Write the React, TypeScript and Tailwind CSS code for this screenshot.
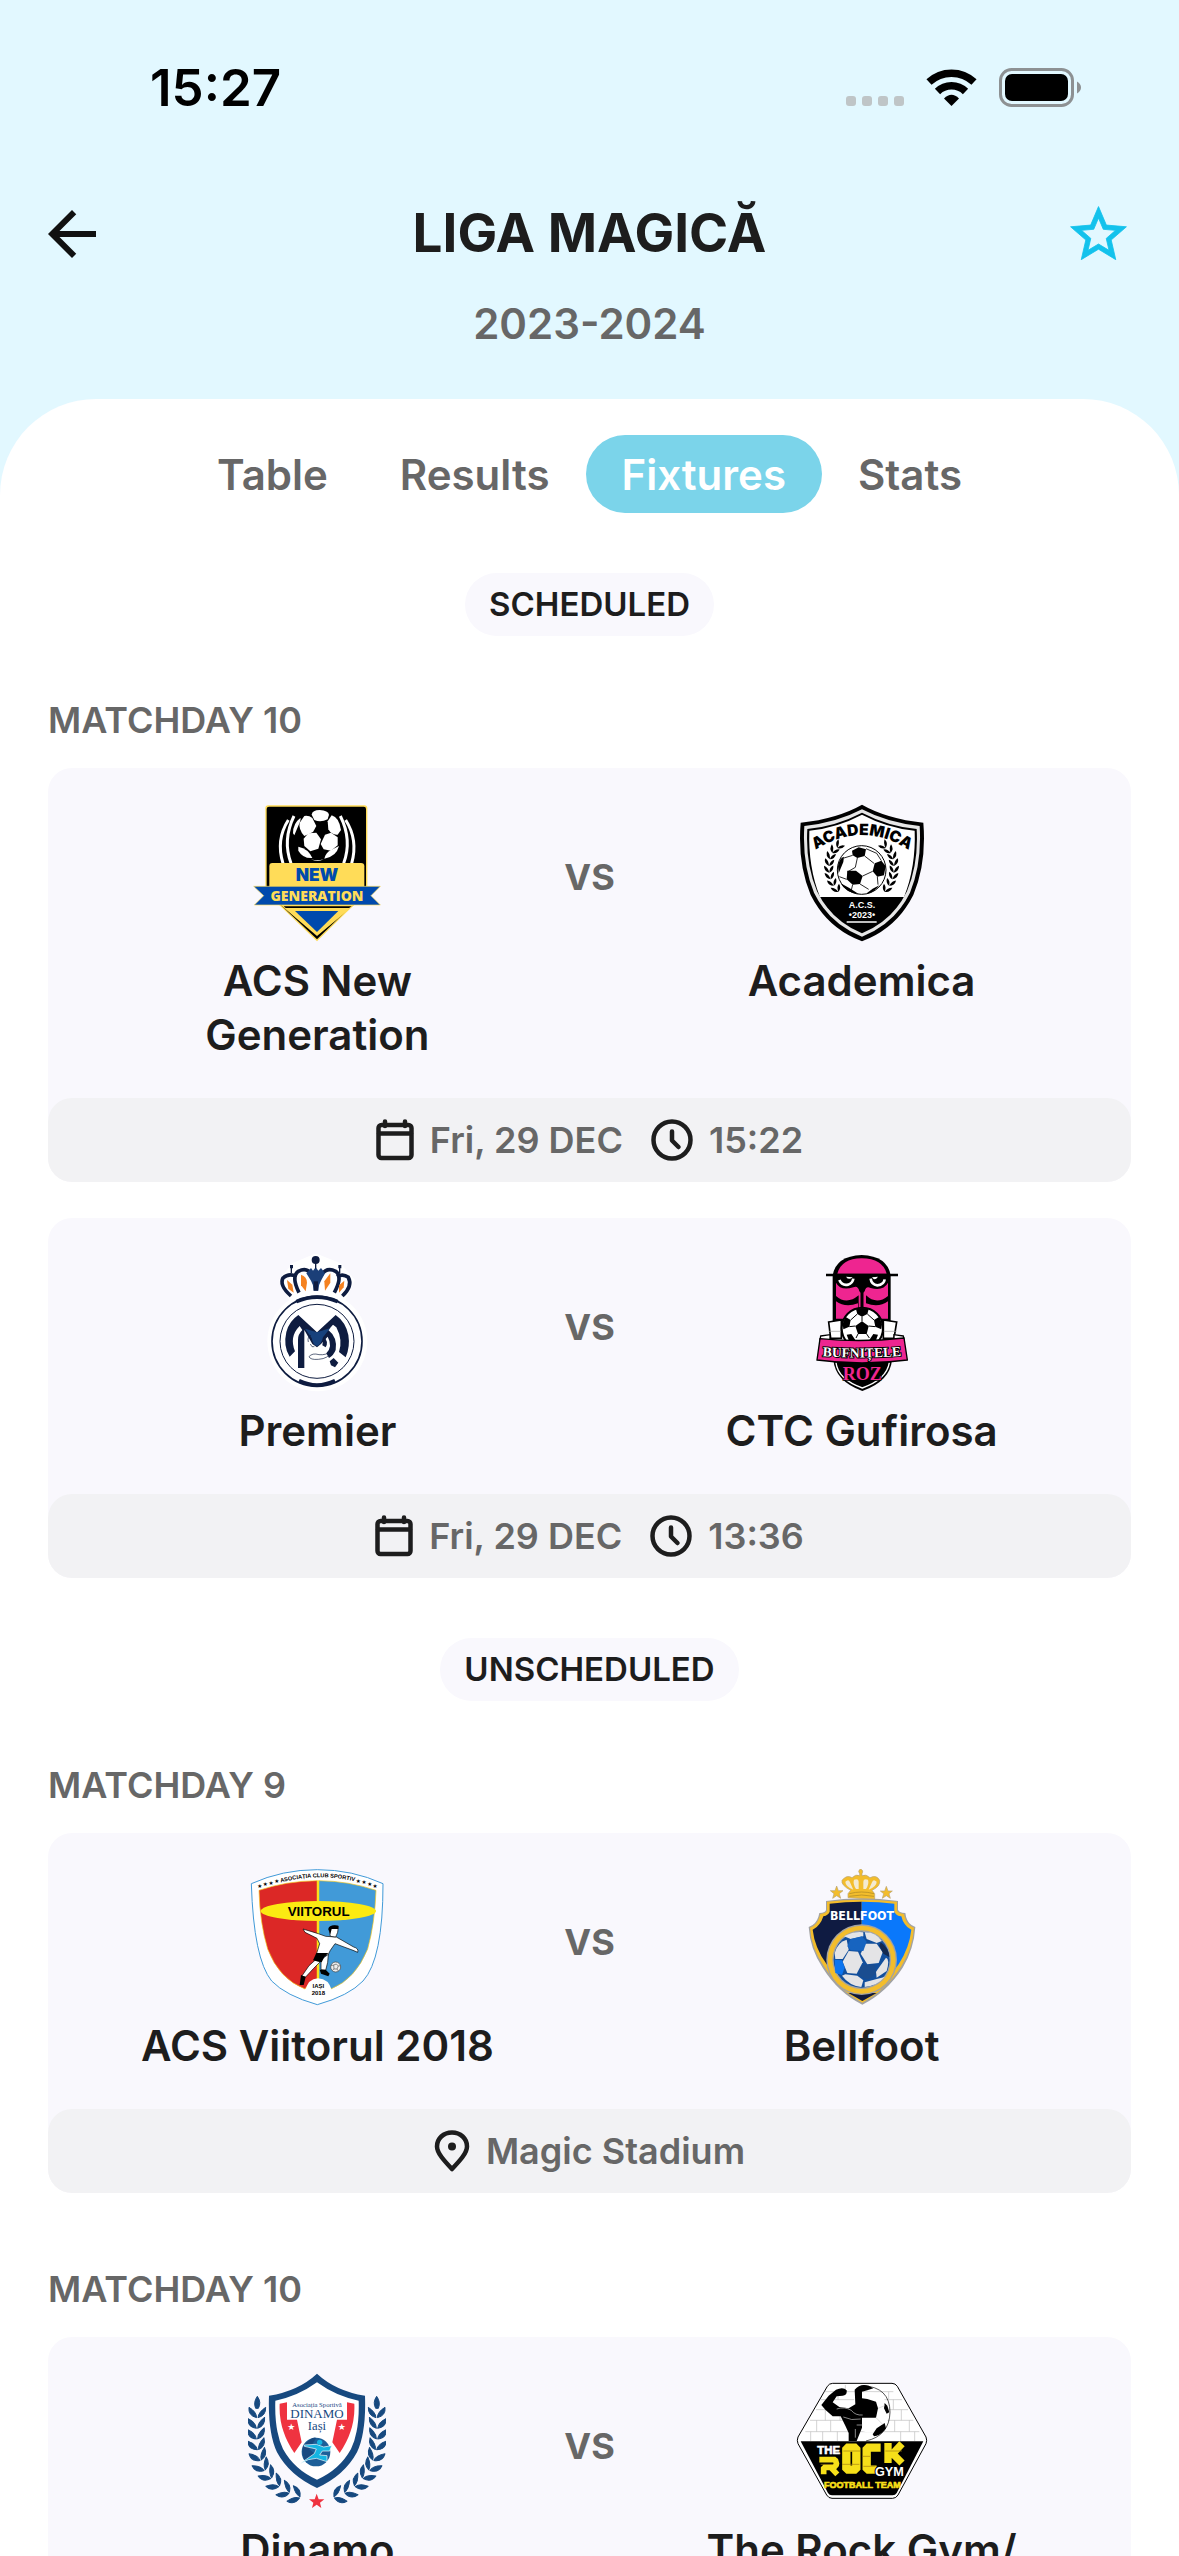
import type { ReactNode } from "react";

const SANS = "'Liberation Sans', Arial, sans-serif";
const SERIF = "'Liberation Serif', 'Times New Roman', serif";
const BLACK_SANS = "Inter, 'Liberation Sans', sans-serif";

function Crest({ box, label, children }: { box: string; label: string; children: ReactNode }) {
  return (
    <svg viewBox={box} className="size-[138px] shrink-0" role="img" aria-label={label}>
      {children}
    </svg>
  );
}

function NewGenerationCrest() {
  return (
    <Crest box="57 72 414 414" label="ACS New Generation crest">
      <path d="M118 76H406Q415 76 415 85V335L264 484L109 335V85Q109 76 118 76Z" fill="#ffdc58" />
      <path d="M120 80H404Q411 80 411 87V335L264 478L113 335V87Q113 80 120 80Z" fill="#000" />
      <g fill="none" stroke="#fff" strokeLinecap="butt">
        <path d="M178 120Q140 180 162 250" strokeWidth="9" />
        <path d="M195 108Q160 180 186 250" strokeWidth="9" />
        <path d="M350 120Q388 180 368 250" strokeWidth="9" />
        <path d="M334 108Q370 180 344 250" strokeWidth="9" />
      </g>
      <circle cx="264" cy="166" r="75" fill="#000" />
      <g fill="#fff" strokeLinejoin="round">
        <path d="M248 104Q250 90 272 90Q298 92 300 104L296 118Q275 128 256 120Z" />
        <path d="M226 108Q240 106 250 114L262 138L252 156L226 168Q208 148 212 128Z" />
        <path d="M192 160Q192 130 214 114Q218 116 206 142L196 166Z" />
        <path d="M308 106Q330 112 336 150L326 164Q308 166 298 148L296 124Z" />
        <path d="M238 160L262 158L276 178L268 206L244 214L226 198L224 176Z" />
        <path d="M288 164L306 158L326 172L326 196L306 212L284 208L275 192Z" />
        <path d="M208 200Q238 206 250 234Q222 236 208 212Z" />
        <path d="M330 198Q322 230 286 236Q290 218 306 210Z" />
        <path d="M246 238Q264 244 284 238Q266 248 246 238Z" />
      </g>
      <path d="M130 249H396Q406 249 406 259V330H121V259Q121 249 130 249Z" fill="#ffdc58" />
      <path d="M155 375H376L264 468Z" fill="#ffdc58" />
      <path d="M164 379H368L360 384H170Z" fill="#000" />
      <path d="M198 393H328L264 456Z" fill="#004aad" />
      <path d="M74 319H454L426 347L454 375H76L104 347Z" fill="#004aad" stroke="#ffdc58" strokeWidth="2" />
      <text x="264" y="303" textAnchor="middle" fontFamily={BLACK_SANS} fontWeight="900" fontSize="52" fill="#004aad">NEW</text>
      <text x="264" y="362" textAnchor="middle" fontFamily="'Open Sans', Lato, sans-serif" fontWeight="800" fontSize="42" fill="#ffdc58">GENERATION</text>
    </Crest>
  );
}

const LAUREL = [
  [208, 196, 40], [192, 210, 30], [182, 228, 15], [178, 248, 5], [177, 268, -5],
  [180, 288, -12], [188, 308, -20], [200, 327, -30],
];

function Laurel() {
  return (
    <g fill="#000">
      {LAUREL.map(([x, y, a]) => (
        <g key={y} transform={`translate(${x} ${y}) rotate(${a})`}>
          <path d="M0 10Q-16 4 -14 -12Q-2 -6 0 10Z" />
          <path d="M0 10Q14 6 14 -10Q2 -6 0 10Z" />
        </g>
      ))}
    </g>
  );
}

function AcademicaCrest() {
  return (
    <Crest box="69 72 414 414" label="Academica crest">
      <path d="M276 74Q350 116 460 128Q470 250 430 345Q380 445 276 484Q172 445 122 345Q82 250 92 128Q202 116 276 74Z" fill="#000" />
      <path d="M276 88Q352 128 449 138Q456 250 420 338Q374 432 276 470Q178 432 132 338Q96 250 103 138Q200 128 276 88Z" fill="#e6e6e6" />
      <path d="M276 98Q352 138 440 147Q446 250 411 334Q368 422 276 460Q184 422 141 334Q106 250 112 147Q200 138 276 98Z" fill="#000" />
      <path d="M276 104Q352 144 434 152Q438 260 402 351H150Q114 260 118 152Q200 144 276 104Z" fill="#fff" />
      <path id="academica-arc" d="M133 212Q276 118 420 212" fill="none" />
      <text fontFamily={BLACK_SANS} fontWeight="900" fontSize="47" fill="#000" textAnchor="middle">
        <textPath href="#academica-arc" startOffset="50%">ACADEMICA</textPath>
      </text>
      <Laurel />
      <g transform="translate(549 0) scale(-1 1)"><Laurel /></g>
      <circle cx="275" cy="270" r="73" fill="#fff" stroke="#000" strokeWidth="3" />
      <g fill="#000">
        <path d="M246 212L266 202L288 208L284 228L262 234L248 226Z" />
        <path d="M232 272L258 272L278 288L270 312L248 314L230 298Z" />
        <path d="M314 250L334 242L347 258L342 286L322 290L308 274Z" />
        <path d="M204 258Q208 234 222 230L220 246L206 280Z" />
        <path d="M290 340L308 326L328 316Q314 336 290 342Z" />
        <path d="M212 310Q236 322 266 342Q226 338 212 310Z" />
      </g>
      <path d="M248 226L222 234M262 234L256 262L232 276M284 228L312 250M308 274L278 288M288 206L320 220L334 242M230 298L208 290M270 312L296 328M322 290L324 314M248 314L244 330" fill="none" stroke="#000" strokeWidth="2.5" />
      <text x="276" y="384" textAnchor="middle" fontFamily={SANS} fontWeight="700" fontSize="27" fill="#fff">A.C.S.</text>
      <text x="276" y="414" textAnchor="middle" fontFamily={SANS} fontWeight="700" fontSize="27" fill="#fff">•2023•</text>
      <path d="M230 426H320" stroke="#e6e6e6" strokeWidth="5" />
    </Crest>
  );
}

function PremierCrest() {
  const navy = "#0e1c40";
  return (
    <Crest box="57 42 414 414" label="Premier crest">
      <circle cx="265" cy="304" r="150" fill="#fff" />
      <path d="M150 120L190 70L260 40L335 70L378 120L350 180H180Z" fill="#fff" />
      <circle cx="264" cy="304" r="135" fill="none" stroke={navy} strokeWidth="5" />
      <path d="M202 185Q264 158 326 185" fill="none" stroke={navy} strokeWidth="11" />
      <path d="M210 422Q264 448 318 422" fill="none" stroke={navy} strokeWidth="11" />
      <circle cx="264" cy="304" r="111" fill="none" stroke={navy} strokeWidth="3" />
      <g fill="none" stroke={navy} strokeWidth="11">
        <path d="M186 168Q150 136 162 114Q180 98 202 110" />
        <path d="M340 168Q372 138 358 112Q342 100 324 110" />
        <path d="M210 158Q186 110 208 94Q234 80 248 104" />
        <path d="M316 158Q342 110 320 94Q294 80 278 104" />
      </g>
      <path d="M232 100L246 84L252 92L260 82L268 92L276 84L288 100L276 122Q268 134 268 152H254Q254 134 246 122Z" fill="#1b3f78" />
      <path d="M254 124H267V152H254Z" fill={navy} />
      <circle cx="260" cy="60" r="12" fill={navy} />
      <path d="M260 70V86M187 80V100M332 80V100" stroke={navy} strokeWidth="4" />
      <path d="M183 75H192V85H183ZM328 75H337V85H328Z" fill={navy} />
      <g fill="#f58220">
        <path d="M174 120L190 134L194 158L178 146Z" />
        <path d="M216 104Q234 110 234 128L230 154L216 136Z" />
        <path d="M304 100L304 128L288 152L286 124Z" />
        <path d="M346 122L344 142L330 158V136Z" />
      </g>
      <path d="M208 225L264 277L320 225Q350 246 358 285Q364 320 350 352L330 336Q342 300 322 262L312 254L298 270Q326 292 320 330Q314 346 300 354L292 340Q312 318 296 290L276 312L264 322L250 312L226 270V384H207V300Q206 284 220 270L212 258Q180 290 198 334L182 350Q162 320 172 276Q180 244 208 225Z" fill={navy} />
      <path d="M228 266L264 277L304 264L282 292Q276 316 264 318Q252 316 248 294Z" fill="#17417c" />
      <path d="M238 306Q234 290 246 286M244 312Q248 324 256 320M240 350Q250 338 270 344Q292 346 306 334Q300 356 268 358Q244 360 240 350Z" fill="none" stroke={navy} strokeWidth="2" />
      <path d="M284 290Q300 304 290 322L280 316Z" fill={navy} />
      <path d="M302 364L314 354L328 368L318 382L306 376Z" fill={navy} />
    </Crest>
  );
}

function GufirosaCrest() {
  const pink = "#ee2590";
  return (
    <Crest box="39 42 414 414" label="CTC Gufirosa crest">
      <path d="M158 106Q168 48 245 45Q322 48 332 106V250H158Z" fill="#000" />
      <path d="M172 101Q184 56 245 55Q308 56 320 101Z" fill={pink} />
      <path d="M138 105H354" stroke="#000" strokeWidth="8" />
      <path d="M168 128Q182 154 220 142Q234 136 238 154L246 162L254 154Q258 136 272 144Q310 154 324 128V168Q290 196 258 166V240H236V166Q200 196 168 168Z" fill={pink} />
      <path d="M168 184Q196 204 234 190V236H168ZM324 184Q296 204 258 190V236H324Z" fill={pink} />
      <path d="M246 156V206" stroke="#000" strokeWidth="9" />
      <g fill="none" stroke="#fff" strokeWidth="8">
        <path d="M178 120Q186 138 204 134Q218 130 220 116" />
        <path d="M272 116Q274 134 292 136Q312 134 314 118" />
      </g>
      <path d="M198 110Q206 122 218 112ZM276 112Q284 124 294 110Z" fill="#fff" />
      <path d="M146 246L184 240V295H152ZM350 246L310 240V295H342Z" fill="#fff" stroke="#000" strokeWidth="5" />
      <path d="M146 274H188M308 274H350" stroke="#999" strokeWidth="2" />
      <circle cx="247" cy="265" r="62" fill="#fff" stroke="#000" strokeWidth="6" />
      <g fill="#000">
        <path d="M228 208Q248 200 266 208L262 222L246 230L232 222Z" />
        <path d="M246 244L266 258L260 282H234L226 258Z" />
        <path d="M188 252L196 230L212 240L208 260L190 268Z" />
        <path d="M306 252L298 230L282 240L286 260L304 268Z" />
        <path d="M200 284L214 282L226 300H206ZM294 284L280 282L268 300H288Z" />
      </g>
      <path d="M246 230V244M226 258L208 260M266 258L286 260M234 282L228 294M260 282L268 294M212 240L232 222M282 240L262 222" stroke="#000" strokeWidth="3" />
      <path d="M160 360H336Q330 424 247 453Q166 424 160 360Z" fill="#000" />
      <path d="M168 368Q174 418 247 444Q320 418 328 368" fill="none" stroke="#fff" strokeWidth="4" />
      <path d="M122 288L150 284V302L120 300ZM370 288L342 284V302L372 300Z" fill="#fff" stroke="#000" strokeWidth="4" />
      <path d="M120 296Q246 308 372 294L382 360Q246 378 111 360Z" fill={pink} stroke="#000" strokeWidth="4" />
      <path id="bufnitele-arc" d="M116 348Q246 358 376 346" fill="none" />
      <text fontFamily={SERIF} fontWeight="700" fontSize="41" fill="#fff" stroke="#000" strokeWidth="6" paintOrder="stroke" textAnchor="middle">
        <textPath href="#bufnitele-arc" startOffset="50%">BUFNIȚELE</textPath>
      </text>
      <text x="247" y="420" textAnchor="middle" fontFamily={SERIF} fontWeight="700" fontSize="54" fill={pink} stroke="#000" strokeWidth="4" paintOrder="stroke">ROZ</text>
    </Crest>
  );
}

function ViitorulCrest() {
  return (
    <Crest box="57 60 414 414" label="ACS Viitorul 2018 crest">
      <path d="M67 104Q160 62 265 62Q370 62 462 104Q462 330 402 396Q360 440 265 467Q170 440 128 396Q74 330 67 104Z" fill="#fff" stroke="#419ad8" strokeWidth="3" />
      <path d="M265 95V424Q250 384 228 420Q150 390 116 300Q92 220 90 124Q170 96 265 95Z" fill="#dc2826" stroke="#f5c518" strokeWidth="2" />
      <path d="M269 95Q360 96 441 124Q438 220 416 300Q380 390 306 420Q290 392 269 392Z" fill="#419ad8" stroke="#f5c518" strokeWidth="2" />
      <path d="M267 95V400" stroke="#f9e11c" strokeWidth="7" />
      <path d="M230 424Q236 390 267 388Q300 390 308 424L265 455Z" fill="#fff" />
      <ellipse cx="268" cy="186" rx="173" ry="30" fill="#fbea12" />
      <text x="269" y="201" textAnchor="middle" fontFamily={SANS} fontWeight="700" fontSize="40" fill="#000">VIITORUL</text>
      <path id="viitorul-arc" d="M150 102Q265 70 382 98" fill="none" />
      <text fontFamily={SANS} fontWeight="700" fontSize="17" fill="#000" textAnchor="middle">
        <textPath href="#viitorul-arc" startOffset="50%">ASOCIAȚIA CLUB SPORTIV</textPath>
      </text>
      <g fontFamily="'DejaVu Sans', sans-serif" fontSize="17" fill="#000" textAnchor="middle">
        <text x="92" y="117">★</text><text x="109" y="111">★</text><text x="126" y="107">★</text><text x="143" y="102">★</text>
        <text x="388" y="101">★</text><text x="405" y="106">★</text><text x="422" y="111">★</text><text x="438" y="116">★</text>
      </g>
      <g stroke="#000" strokeWidth="2" strokeLinejoin="round">
        <path d="M222 240L268 254L290 262L322 264L374 294Q390 298 386 310L372 304L318 284L304 304L296 320L262 316L272 284L264 268L228 250Z" fill="#fff" />
        <path d="M300 240Q306 228 328 232Q328 252 320 264L304 262Z" fill="#fff" />
        <path d="M258 334L274 338L254 358L230 384L218 382L240 350ZM276 332L298 316L296 340L290 364L276 362Z" fill="#fff" />
      </g>
      <path d="M298 240Q300 226 328 230L328 240L308 240L304 256Z" fill="#000" />
      <path d="M262 312L298 312L286 324L278 340L252 334ZM216 378L230 384L224 408H212ZM272 362L290 362L302 374L298 382L276 374Z" fill="#000" />
      <circle cx="320" cy="354" r="15" fill="#eee" stroke="#444" strokeWidth="2" />
      <path d="M314 348L322 345L328 351L324 360H315ZM306 350L314 348M328 351L334 350M324 360L328 366M315 360L310 364" fill="none" stroke="#555" strokeWidth="2" />
      <text x="268" y="416" textAnchor="middle" fontFamily={SANS} fontWeight="700" fontSize="18" fill="#000">IAȘI</text>
      <text x="268" y="438" textAnchor="middle" fontFamily={SANS} fontWeight="700" fontSize="18" fill="#000">2018</text>
    </Crest>
  );
}

function BellfootCrest() {
  const gold = "#f3bd2c";
  return (
    <Crest box="39 60 414 414" label="Bellfoot crest">
      <path d="M138 156Q190 148 245 148Q300 148 354 156V182Q356 190 376 192Q380 226 406 234Q402 300 368 356Q320 430 247 467Q174 430 128 356Q90 300 86 234Q112 226 118 192Q138 190 138 182Z" fill="#a2a2a2" />
      <path d="M141 158Q190 152 245 152Q300 152 351 158V184Q354 194 372 195Q378 228 402 236Q398 298 364 352Q318 424 247 461Q176 424 132 352Q94 298 90 236Q114 228 121 195Q139 194 141 184Z" fill={gold} />
      <path d="M149 164Q195 158 245 158V448Q182 412 140 346Q104 296 98 242Q122 230 130 202Q146 198 149 188Z" fill="#0f1b42" />
      <path d="M245 158Q298 158 343 164V188Q348 200 364 202Q370 230 394 242Q388 296 356 346Q312 412 245 448Z" fill="#0a78fb" />
      <path d="M205 432H290L247 456Z" fill="#10183c" />
      <text x="246" y="213" textAnchor="middle" fontFamily="'DejaVu Sans Condensed', 'Open Sans', sans-serif" fontStretch="normal" fontWeight="700" fontSize="37" fill="#fff">BELLFOOT</text>
      <circle cx="245" cy="332" r="106" fill="#a2a2a2" />
      <circle cx="245" cy="332" r="102" fill={gold} />
      <circle cx="245" cy="332" r="88" fill="#a2a2a2" />
      <circle cx="245" cy="332" r="84" fill="#124f9d" />
      <g fill="#e4e4e6">
        <path d="M192 262Q222 246 250 250L250 262L212 270Z" />
        <path d="M254 250Q286 248 306 276L290 282L260 270Z" />
        <path d="M164 312Q172 280 200 272L206 302L188 330L166 330Z" />
        <path d="M206 306L234 308L248 340L230 374L202 372L188 338Z" />
        <path d="M256 284L290 284L308 310L296 342L262 346L242 314Z" />
        <path d="M196 376L232 380L250 394L244 414Q208 410 186 380Z" />
        <path d="M288 368L318 326Q330 330 320 366L290 386Z" />
        <path d="M254 400L290 390L314 384Q290 412 254 414Z" />
      </g>
      <path d="M212 270L246 262L260 278L250 306L212 304L202 292Z" fill="#1764c0" />
      <path d="M248 348L284 346L288 374L264 392L238 382L236 366Z" fill="#1a4d90" />
      <path d="M164 332L186 334L194 356L186 378L166 372Z" fill="#0b74ef" />
      <path d="M302 280Q326 296 328 324L310 314L298 290Z" fill="#13294f" />
      <g fill={gold} stroke="#b8a372" strokeWidth="2">
        <path d="M170 111L175 125L189 125L178 134L182 148L170 140L158 148L162 134L151 125L165 125Z" />
        <path d="M319 112L324 126L337 126L327 134L331 148L319 140L307 148L311 134L301 126L314 126Z" />
        <path d="M204 134L212 124Q182 108 186 94Q200 76 216 86Q228 74 239 80V74Q232 66 241 60Q252 64 246 74V80Q258 74 270 86Q290 76 299 94Q302 112 276 124L284 134V150L204 146Z" />
      </g>
      <g fill="#f4ead0">
        <path d="M196 98Q206 88 210 100L220 122Q196 112 196 98ZM290 98Q280 88 276 100L266 122Q290 112 290 98Z" />
        <path d="M222 92Q236 88 236 98V120H228Q218 104 222 92ZM264 92Q250 88 250 98V120H258Q268 104 264 92Z" />
      </g>
      <path d="M208 134Q245 124 282 134M208 142Q245 134 282 142" fill="none" stroke="#a88522" strokeWidth="2" />
    </Crest>
  );
}

const BRANCH: [number, number, number][] = [
  [84, 176, 0], [83, 208, -4], [83, 240, -6], [86, 272, -12], [94, 304, -22],
  [106, 334, -32], [126, 358, -42], [150, 382, -52], [180, 402, -60], [212, 416, -68],
];

function Branch() {
  return (
    <g fill="#17497f" stroke="#17497f" strokeWidth="3" strokeLinejoin="round">
      <path d="M85 112Q98 130 88 148H80Q72 130 85 112Z" />
      {BRANCH.map(([x, y, a]) => (
        <g key={y} transform={`translate(${x} ${y}) rotate(${a})`}>
          <path d="M-1 0Q-2 -18 -24 -31Q-27 -6 -1 0Z" />
          <path d="M3 0Q4 -16 26 -31Q27 -6 3 0Z" />
        </g>
      ))}
    </g>
  );
}

function DinamoCrest() {
  return (
    <Crest box="57 42 414 414" label="Dinamo crest">
      <Branch />
      <g transform="translate(528 0) scale(-1 1)"><Branch /></g>
      <path d="M264 44Q320 96 408 110Q412 220 384 280Q346 350 264 387Q182 350 144 280Q116 220 120 110Q208 96 264 44Z" fill="#17497f" />
      <path d="M264 70Q322 112 389 125Q392 216 366 270Q332 332 264 362Q196 332 162 270Q136 216 139 125Q206 112 264 70Z" fill="#fff" />
      <path d="M152 134L174 130V182H204L218 250L196 282Q148 212 152 134ZM376 134L354 130V182H324L310 250L332 282Q380 212 376 134Z" fill="#ef3340" />
      <g fontFamily="'DejaVu Sans', sans-serif" fill="#fff" fontSize="27" textAnchor="middle">
        <text x="187" y="213">★</text><text x="338" y="213">★</text>
      </g>
      <text x="264" y="143" textAnchor="middle" fontFamily={SERIF} fontSize="20" fill="#17497f">Asociația Sportivă</text>
      <text x="264" y="178" textAnchor="middle" fontFamily={SERIF} fontSize="39" fill="#17497f">DINAMO</text>
      <text x="264" y="212" textAnchor="middle" fontFamily={SERIF} fontSize="38" fill="#17497f">Iași</text>
      <circle cx="261" cy="279" r="43" fill="#1d5f98" />
      <path d="M222 262Q250 230 262 237L240 270L258 286L230 308Q216 290 222 262Z" fill="#184a80" />
      <path d="M213 314L256 284L262 270L226 262V258L262 256L284 264L308 260L302 276L280 276L272 288L294 290V308L262 298L238 302Z" fill="#15b5e2" stroke="#fff" strokeWidth="2" />
      <circle cx="272" cy="250" r="8" fill="#15b5e2" />
      <path d="M263 404L269 421H286L273 431L277 447L263 437L249 447L253 431L240 421H257Z" fill="#ef3340" />
    </Crest>
  );
}

function RockGymCrest() {
  return (
    <Crest box="39 42 414 414" label="The Rock Gym crest">
      <path d="M158 73H336Q346 73 352 82L438 234Q442 244 438 254L354 408Q348 418 338 418H156Q146 418 140 408L54 254Q50 244 54 234L142 82Q148 73 158 73Z" fill="#fff" stroke="#000" strokeWidth="3" />
      <path d="M62 247H430L350 402Q346 409 338 409H156Q148 409 144 402Z" fill="#000" />
      <path d="M134 98H340M122 122H366M108 152H384M90 184H400M76 218H418M196 78V98M174 98V122M316 152V184M340 122V152M364 152V184M344 184V218M388 184V218M326 98V122M136 152V184M110 184V218M152 184V218M180 152V184M92 218V246M128 218V246M172 218V246M362 218V246M404 218V246" stroke="#bdbdbd" strokeWidth="2" />
      <circle cx="268" cy="160" r="60" fill="#fff" />
      <path d="M248 80Q330 84 330 160Q328 230 258 246" fill="none" stroke="#000" strokeWidth="2" />
      <path d="M124 138L146 110L168 92Q190 82 200 94Q202 108 188 110L170 112L158 130L178 144L206 148L226 136L224 92Q240 72 266 80L280 88L262 94L246 98V118L262 120L288 128L294 148L288 176L246 176V206L230 246H206V222L196 200L182 172L158 172L136 152Z" fill="#000" />
      <path d="M278 226L290 208L314 192L318 208Q302 230 282 232ZM314 132L322 140L328 160L320 164L312 148Z" fill="#000" />
      <path d="M170 150Q194 142 214 154Q226 170 248 168M190 174Q214 186 242 180M230 198H248M226 210V236M288 176L308 196M294 148L314 140" fill="none" stroke="#ccc" strokeWidth="2" />
      <text x="112" y="284" fontFamily={SANS} fontWeight="700" fontSize="34" fill="#fff" stroke="#fff" strokeWidth="2">THE</text>
      <g fill="none" stroke="#f6df19" strokeWidth="25" strokeLinejoin="bevel">
        <path d="M118 302H166L170 316L162 325H131V346M152 325L172 346" strokeWidth="17" />
        <path d="M199 266H229V332H199Z" />
        <path d="M302 266H260V332H290" />
        <path d="M324 252V312M366 254L338 284L366 312" strokeWidth="22" />
      </g>
      <path d="M190 276H240M186 316H238M248 292H270M316 276H366M122 316H160M250 322H286" stroke="#a17d12" strokeWidth="2" />
      <text x="328" y="350" textAnchor="middle" fontFamily={SANS} fontWeight="700" fontSize="38" fill="#fff" stroke="#000" strokeWidth="6" paintOrder="stroke">GYM</text>
      <text x="247" y="386" textAnchor="middle" fontFamily={SANS} fontWeight="700" fontSize="27" fill="#f6df19" stroke="#f6df19" strokeWidth="2">FOOTBALL TEAM</text>
    </Crest>
  );
}

function CalendarIcon() {
  return (
    <svg viewBox="0 0 38 42" className="h-[42px] w-[38px]" fill="none" stroke="#1d1d1d" strokeWidth="4.5" aria-hidden="true">
      <rect x="2.5" y="6" width="33" height="33" rx="3" />
      <path d="M3 14.5H35M9 2.5V7M29 2.5V7" strokeLinecap="round" />
    </svg>
  );
}

function ClockIcon() {
  return (
    <svg viewBox="0 0 42 42" className="size-[42px]" fill="none" stroke="#1d1d1d" strokeWidth="4.5" aria-hidden="true">
      <circle cx="21" cy="21" r="18.5" />
      <path d="M21 12.500V21.500L27.500 28" strokeLinecap="round" strokeLinejoin="round" />
    </svg>
  );
}

function PinIcon() {
  return (
    <svg viewBox="0 0 36 42" className="h-[42px] w-[36px]" fill="none" stroke="#1d1d1d" strokeWidth="4.5" aria-hidden="true">
      <path d="M18 39C10 30.500 3 23 3 16.500C3 8.500 9.500 2.500 18 2.500S33 8.500 33 16.500C33 23 26 30.500 18 39Z" strokeLinejoin="round" />
      <circle cx="18" cy="16.500" r="4" fill="#1d1d1d" stroke="none" />
    </svg>
  );
}

function StatusIcons() {
  return (
    <svg viewBox="846 68 236 42" className="h-[42px] w-[236px]" role="img" aria-label="Wi-Fi connected, battery full">
      <g fill="#bfc5c7">
        <rect x="846" y="96" width="10" height="10" rx="3" />
        <rect x="862" y="96" width="10" height="10" rx="3" />
        <rect x="878" y="96" width="10" height="10" rx="3" />
        <rect x="894" y="96" width="10" height="10" rx="3" />
      </g>
      <g fill="none" stroke="#000">
        <path d="M929 82A33 33 0 0 1 974 82" strokeWidth="7.500" />
        <path d="M937.500 91.500A20 20 0 0 1 965.500 91.500" strokeWidth="7.500" />
      </g>
      <path d="M944 98.500Q951.500 91 959 98.500L951.500 106Z" fill="#000" />
      <rect x="1000.500" y="69.500" width="72" height="36" rx="11" fill="none" stroke="#8d9193" strokeWidth="3" />
      <rect x="1005" y="74" width="63" height="27" rx="7" fill="#000" />
      <path d="M1077 81.500Q1081 84 1081 87.500T1077 93.500Z" fill="#8d9193" />
    </svg>
  );
}

type Team = { name: string; crest: ReactNode };
type Match = { home: Team; away: Team; date?: string; time?: string; venue?: string };
type Matchday = { title: string; matches: Match[] };

const sections: { title: string; matchdays: Matchday[] }[] = [
  {
    title: "SCHEDULED",
    matchdays: [
      {
        title: "MATCHDAY 10",
        matches: [
          {
            home: { name: "ACS New Generation", crest: <NewGenerationCrest /> },
            away: { name: "Academica", crest: <AcademicaCrest /> },
            date: "Fri, 29 DEC",
            time: "15:22",
          },
          {
            home: { name: "Premier", crest: <PremierCrest /> },
            away: { name: "CTC Gufirosa", crest: <GufirosaCrest /> },
            date: "Fri, 29 DEC",
            time: "13:36",
          },
        ],
      },
    ],
  },
  {
    title: "UNSCHEDULED",
    matchdays: [
      {
        title: "MATCHDAY 9",
        matches: [
          {
            home: { name: "ACS Viitorul 2018", crest: <ViitorulCrest /> },
            away: { name: "Bellfoot", crest: <BellfootCrest /> },
            venue: "Magic Stadium",
          },
        ],
      },
      {
        title: "MATCHDAY 10",
        matches: [
          {
            home: { name: "Dinamo", crest: <DinamoCrest /> },
            away: { name: "The Rock Gym/", crest: <RockGymCrest /> },
          },
        ],
      },
    ],
  },
];

function TeamBlock({ team }: { team: Team }) {
  return (
    <div className="flex min-w-0 flex-col items-center gap-3">
      {team.crest}
      <span className="text-center text-[42px] leading-[54px] font-semibold text-[#1d1d1d]">{team.name}</span>
    </div>
  );
}

function MatchCard({ match }: { match: Match }) {
  return (
    <article className="rounded-3xl bg-[#f9f8fd]">
      <div className="grid grid-cols-[2fr_1fr_2fr] px-22 py-9">
        <TeamBlock team={match.home} />
        <span className="flex h-[146px] items-center justify-center text-4xl font-bold text-[#676767]">VS</span>
        <TeamBlock team={match.away} />
      </div>
      <footer className="flex h-[84px] items-center justify-center gap-7 rounded-3xl bg-[#f2f2f4] text-4xl font-semibold text-[#676767]">
        {match.date && (
          <span className="flex items-center gap-4">
            <CalendarIcon />
            {match.date}
          </span>
        )}
        {match.time && (
          <span className="flex items-center gap-4">
            <ClockIcon />
            {match.time}
          </span>
        )}
        {match.venue && (
          <span className="flex items-center gap-4">
            <PinIcon />
            {match.venue}
          </span>
        )}
      </footer>
    </article>
  );
}

const tabs = ["Table", "Results", "Fixtures", "Stats"];

export default function App() {
  return (
    <div className="flex h-screen flex-col overflow-hidden bg-[#e2f8ff] font-[Inter,'Liberation_Sans',sans-serif]">
      <div className="flex h-[177px] shrink-0 items-center justify-between pr-[97px] pl-[150px]">
        <span className="text-[51px] font-semibold text-black">15:27</span>
        <StatusIcons />
      </div>
      <header className="shrink-0 pb-[42px]">
        <div className="grid h-[114px] grid-cols-[1fr_auto_1fr] items-center px-9">
          <button type="button" aria-label="Back" className="justify-self-start">
            <svg viewBox="0 0 24 24" className="size-[72px]" fill="#111">
              <path d="M20 11H7.830l5.590-5.590L12 4l-8 8 8 8 1.410-1.410L7.830 13H20v-2z" />
            </svg>
          </button>
          <h1 className="text-[53px] font-bold text-[#1d1d1d]">LIGA MAGICĂ</h1>
          <button type="button" aria-label="Add to favourites" className="flex w-[90px] justify-center justify-self-end">
            <svg viewBox="0 0 24 24" className="size-[67px]" fill="#13c2ec" stroke="#13c2ec" strokeWidth="0.3">
              <path d="M22 9.240l-7.190-.620L12 2 9.190 8.630 2 9.240l5.460 4.730L5.820 21 12 17.270 18.180 21l-1.630-7.030L22 9.240zM12 15.400l-3.760 2.270 1-4.280-3.320-2.880 4.380-.380L12 6.100l1.710 4.040 4.380.380-3.320 2.880 1 4.280L12 15.400z" />
            </svg>
          </button>
        </div>
        <p className="text-center text-[42px] leading-[66px] font-semibold text-[#676767]">2023-2024</p>
      </header>
      <main className="min-h-0 flex-1 overflow-y-auto rounded-t-[96px] bg-white px-12 pt-9 [scrollbar-width:none]">
        <nav className="flex justify-center" aria-label="League sections">
          {tabs.map((tab) => (
            <button
              key={tab}
              type="button"
              aria-current={tab === "Fixtures" ? "page" : undefined}
              className={
                tab === "Fixtures"
                  ? "h-[78px] rounded-full bg-[#7bd4ea] px-9 text-[42px] font-semibold text-white"
                  : "h-[78px] rounded-full px-9 text-[42px] font-semibold text-[#676767]"
              }
            >
              {tab}
            </button>
          ))}
        </nav>
        {sections.map((section) => (
          <section key={section.title} className="pt-[60px]">
            <h2 className="mx-auto flex h-[63px] w-fit items-center rounded-full bg-[#f9f8fd] px-6 text-[33px] font-semibold text-[#1d1d1d]">
              {section.title}
            </h2>
            <div className="flex flex-col gap-[72px] pt-[60px]">
              {section.matchdays.map((day) => (
                <div key={day.title} className="flex flex-col">
                  <h3 className="mb-6 text-4xl leading-[48px] font-semibold text-[#676767]">{day.title}</h3>
                  <div className="flex flex-col gap-9">
                    {day.matches.map((match) => (
                      <MatchCard key={match.home.name} match={match} />
                    ))}
                  </div>
                </div>
              ))}
            </div>
          </section>
        ))}
      </main>
    </div>
  );
}
